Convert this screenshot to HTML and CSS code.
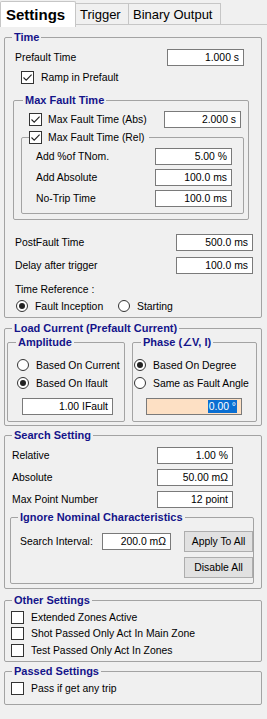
FILE: index.html
```html
<!DOCTYPE html>
<html>
<head>
<meta charset="utf-8">
<link rel="stylesheet" href="styles.css">
</head>
<body>
<div class="tabs">
  <div class="tab active">Settings</div>
  <div class="tab t-trigger">Trigger</div>
  <div class="tab t-binary">Binary Output</div>
  <div class="tab-fill"></div>
</div>
<div class="page">
  <fieldset class="grp top g-time">
    <legend>Time</legend>
    <div class="row r-prefault"><span>Prefault Time</span><span class="inp">1.000 s</span></div>
    <div class="row r-ramp"><span class="cb"><svg width="11" height="11" viewBox="0 0 11 11"><path d="M1.5 5.5 L4.2 8.2 L9.6 2.6" fill="none" stroke="#222" stroke-width="1.1"/></svg></span><span>Ramp in Prefault</span></div>
    <fieldset class="grp g-maxfault">
      <legend>Max Fault Time</legend>
      <div class="row r-abs"><span class="cb"><svg width="11" height="11" viewBox="0 0 11 11"><path d="M1.5 5.5 L4.2 8.2 L9.6 2.6" fill="none" stroke="#222" stroke-width="1.1"/></svg></span><span class="grow">Max Fault Time (Abs)</span><span class="inp">2.000 s</span></div>
      <fieldset class="grp g-rel">
        <legend class="lg-cb"><span class="cb"><svg width="11" height="11" viewBox="0 0 11 11"><path d="M1.5 5.5 L4.2 8.2 L9.6 2.6" fill="none" stroke="#222" stroke-width="1.1"/></svg></span><span>Max Fault Time (Rel)</span></legend>
        <div class="row r-rel"><span>Add %of TNom.</span><span class="inp">5.00 %</span></div>
        <div class="row r-rel"><span>Add Absolute</span><span class="inp">100.0 ms</span></div>
        <div class="row r-rel"><span>No-Trip Time</span><span class="inp">100.0 ms</span></div>
      </fieldset>
    </fieldset>
    <div class="row r-post"><span>PostFault Time</span><span class="inp">500.0 ms</span></div>
    <div class="row r-post r-delay"><span>Delay after trigger</span><span class="inp">100.0 ms</span></div>
    <div class="row r-tref"><span>Time Reference :</span></div>
    <div class="row r-radios">
      <span class="ritem first"><span class="rb on"></span><span>Fault Inception</span></span>
      <span class="ritem"><span class="rb"></span><span>Starting</span></span>
    </div>
  </fieldset>

  <fieldset class="grp top g-load">
    <legend>Load Current (Prefault Current)</legend>
    <div class="lc-cols">
      <fieldset class="grp g-amp">
        <legend>Amplitude</legend>
        <div class="row r-opt"><span class="rb"></span><span>Based On Current</span></div>
        <div class="row r-opt"><span class="rb on"></span><span>Based On Ifault</span></div>
        <div class="inp amp-inp">1.00 IFault</div>
      </fieldset>
      <fieldset class="grp g-phase">
        <legend>Phase (∠V, I)</legend>
        <div class="row r-opt"><span class="rb on"></span><span>Based On Degree</span></div>
        <div class="row r-opt"><span class="rb"></span><span>Same as Fault Angle</span></div>
        <div class="inp phase-inp"><span class="sel">0.00 °</span></div>
      </fieldset>
    </div>
  </fieldset>

  <fieldset class="grp top g-search">
    <legend>Search Setting</legend>
    <div class="row r-search"><span>Relative</span><span class="inp">1.00 %</span></div>
    <div class="row r-search"><span>Absolute</span><span class="inp">50.00 mΩ</span></div>
    <div class="row r-search"><span>Max Point Number</span><span class="inp">12 point</span></div>
    <fieldset class="grp g-ignore">
      <legend>Ignore Nominal Characteristics</legend>
      <div class="ign-body">
        <div class="ign-left"><span>Search Interval:</span><span class="inp si-inp">200.0 mΩ</span></div>
        <div class="btns">
          <div class="btn">Apply To All</div>
          <div class="btn">Disable All</div>
        </div>
      </div>
    </fieldset>
  </fieldset>

  <fieldset class="grp top g-other">
    <legend>Other Settings</legend>
    <div class="row r-chk"><span class="cb"></span><span>Extended Zones Active</span></div>
    <div class="row r-chk"><span class="cb"></span><span>Shot Passed Only Act In Main Zone</span></div>
    <div class="row r-chk"><span class="cb"></span><span>Test Passed Only Act In Zones</span></div>
  </fieldset>

  <fieldset class="grp top g-passed">
    <legend>Passed Settings</legend>
    <div class="row r-chk r-pass"><span class="cb"></span><span>Pass if get any trip</span></div>
  </fieldset>
</div>
</body>
</html>
```

FILE: styles.css
```css
* { box-sizing: border-box; }

body {
  margin: 0;
  width: 267px;
  height: 719px;
  overflow: hidden;
  background: #f0f0f0;
  font-family: "Liberation Sans", Arial, "DejaVu Sans", sans-serif;
  font-size: 10.4px;
  color: #000;
}

/* tabs */
.tabs {
  display: flex;
  align-items: flex-start;
  height: 27px;
}
.tab {
  display: flex;
  align-items: center;
  font-size: 13px;
  border: 1px solid #c6c6c6;
  background: #f0f0f0;
  white-space: nowrap;
}
.tab.active {
  margin-top: 1px;
  height: 26px;
  width: 76px;
  background: #fff;
  border-bottom: none;
  border-radius: 2px 2px 0 0;
  font-weight: bold;
  font-size: 15px;
  padding-left: 5px;
}
.t-trigger {
  margin-top: 3px;
  height: 22px;
  width: 53px;
  border-left: none;
  padding-left: 4px;
}
.t-binary {
  margin-top: 3px;
  height: 22px;
  width: 92px;
  border-left: none;
  padding-left: 4px;
}
.tab-fill {
  flex: 1;
  height: 25px;
  border-bottom: 1px solid #c6c6c6;
}

/* page */
.page {
  padding: 4px 0 0 4px;
}

.grp {
  margin: 0;
  padding: 0;
  min-width: 0;
  border: 1px solid #a3a3a3;
  border-radius: 2px;
}
legend {
  font-weight: bold;
  font-size: 11px;
  line-height: 13px;
  color: #14148a;
  padding: 0 2px;
  margin-left: 7px;
}
.top { width: 258px; }

.row {
  display: flex;
  align-items: center;
  white-space: nowrap;
}
.grow { flex: 1; }

.inp {
  display: flex;
  align-items: center;
  justify-content: flex-end;
  height: 17px;
  width: 77px;
  background: #fff;
  border: 1px solid #7a7a7a;
  padding-right: 4px;
  white-space: nowrap;
}

.cb {
  width: 13px;
  height: 13px;
  flex: none;
  border: 1px solid #333;
  background: #fff;
  display: flex;
  align-items: center;
  justify-content: center;
}
.cb svg { display: block; }

.rb {
  width: 12px;
  height: 12px;
  flex: none;
  border: 1px solid #333;
  border-radius: 50%;
  background: #fff;
  display: flex;
  align-items: center;
  justify-content: center;
}
.rb.on::after {
  content: "";
  width: 6px;
  height: 6px;
  border-radius: 50%;
  background: #222;
}

/* Time */
.g-time { padding: 3px 0 2px 0; }
.r-prefault {
  height: 20px;
  padding-left: 10px;
  padding-right: 17px;
  justify-content: space-between;
}
.r-ramp {
  height: 21px;
  padding-left: 16px;
  gap: 7px;
}
.g-maxfault {
  width: 236px;
  margin: 6px 0 0 8px;
  padding: 2px 0 5px 0;
}
.g-maxfault > legend { margin-left: 9px; }
.r-abs {
  height: 20px;
  padding-left: 15px;
  padding-right: 7px;
  gap: 6px;
}
.g-rel {
  width: 223px;
  margin: 2px 0 0 7px;
  padding: 2px 0 4px 0;
}
legend.lg-cb {
  display: flex;
  align-items: center;
  gap: 6px;
  margin-left: 7px;
  padding: 0 5px 0 0;
  font-weight: normal;
  font-size: 10.4px;
  color: #000;
}
.r-rel {
  height: 21px;
  padding-left: 14px;
  padding-right: 11px;
  justify-content: space-between;
}
.r-post {
  height: 23px;
  margin-top: 11px;
  padding-left: 10px;
  padding-right: 8px;
  justify-content: space-between;
}
.r-delay { margin-top: 0; }
.r-tref {
  height: 16px;
  margin-top: 4px;
  padding-left: 10px;
}
.r-radios {
  height: 18px;
  padding-left: 11px;
}
.ritem {
  display: flex;
  align-items: center;
  gap: 7px;
}
.ritem.first { width: 102px; }

/* Load current */
.g-load { margin-top: 4px; padding: 0 0 3px 0; }
.lc-cols {
  display: flex;
  gap: 7px;
  margin-top: 1px;
  padding-left: 2px;
}
.g-amp { width: 118px; padding: 7px 0 6px 0; }
.g-phase { width: 125px; padding: 7px 0 6px 0; }
.g-amp > legend, .g-phase > legend { margin-left: 8px; }
.r-opt { height: 18px; gap: 7px; }
.g-amp .r-opt { padding-left: 9px; }
.g-phase .r-opt { padding-left: 1px; }
.amp-inp {
  width: 91px;
  margin: 6px 0 0 14px;
}
.phase-inp {
  width: 96px;
  margin: 6px 0 0 13px;
  background: #fde0c4;
  padding-right: 4px;
}
.sel {
  background: #0a6fd2;
  color: #fff;
  line-height: 13px;
  padding: 0 1px;
}

/* Search */
.g-search { margin-top: 3px; padding: 2px 0 4px 0; }
.r-search {
  height: 22px;
  padding-left: 7px;
  padding-right: 28px;
  justify-content: space-between;
}
.r-search .inp { width: 76px; }
.g-ignore {
  width: 244px;
  margin: 1px 0 0 5px;
  padding: 7px 0 5px 0;
}
.ign-body {
  display: flex;
  align-items: flex-start;
}
.ign-left {
  display: flex;
  align-items: center;
  justify-content: space-between;
  width: 167px;
  height: 21px;
  padding-left: 9px;
  white-space: nowrap;
}
.si-inp { width: 69px; }
.btns {
  display: flex;
  flex-direction: column;
  gap: 5px;
  margin-left: 13px;
}
.btn {
  width: 69px;
  height: 21px;
  background: #e1e1e1;
  border: 1px solid #adadad;
  display: flex;
  align-items: center;
  justify-content: center;
  white-space: nowrap;
}

/* Other / Passed */
.g-other { margin-top: 5px; padding: 2px 0 2.5px 0; }
.r-chk {
  height: 16.5px;
  padding-left: 6px;
  gap: 7px;
}
.g-passed { margin-top: 3px; padding: 2px 0 8px 0; }
.r-pass { height: 16px; }
```
